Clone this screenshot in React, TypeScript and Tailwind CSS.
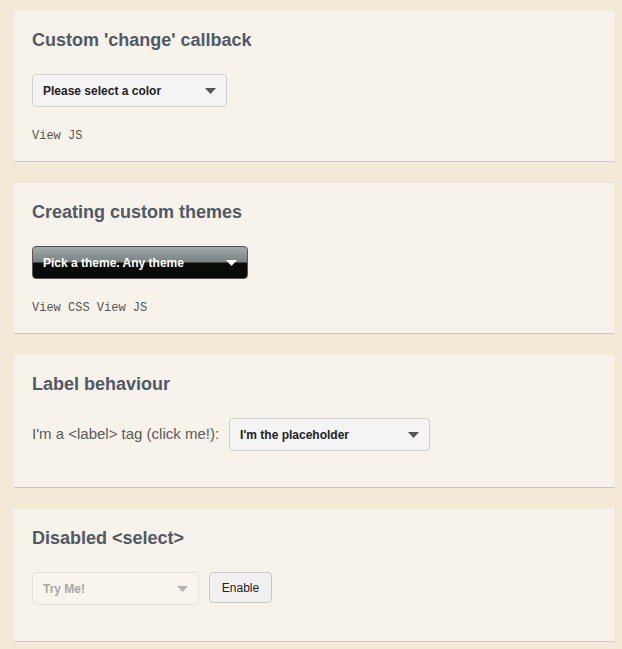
const Caret = ({ className }: { className: string }) => (
  <svg width="11" height="6" viewBox="0 0 11 6" className={className}>
    <path d="M0 0h11L5.5 6z" fill="currentColor" />
  </svg>
);

const Card = ({
  title,
  children,
  bottom = "pb-[17px]",
}: {
  title: string;
  children: React.ReactNode;
  bottom?: string;
}) => (
  <section className={`border-b border-[#c9c7c3] bg-[#f8f3ea] px-[18px] pt-[18px] ${bottom}`}>
    <h2 className="text-[18px] font-bold leading-[22px] text-[#4f5a68]">{title}</h2>
    {children}
  </section>
);

const Links = ({ items }: { items: string[] }) => (
  <p className="mt-[21px] font-['Liberation_Mono',monospace] text-[12px] leading-[16px] text-[#555]">
    {items.join(" ")}
  </p>
);

export default function App() {
  return (
    <main className="min-h-screen bg-[#f4e8d6] px-[14px] pt-[11px] pb-2 font-['Liberation_Sans',Arial,sans-serif] w-[628px]">
      <div className="flex w-[600px] flex-col gap-[21px]">
        <Card title="Custom 'change' callback">
          <div className="mt-[23px] flex h-[33px] w-[195px] items-center justify-between rounded-[4px] border border-[#cfcfcf] bg-[#f4f4f4] pl-[10px] pr-[10px]">
            <span className="text-[12px] font-bold text-[#222]">Please select a color</span>
            <Caret className="text-[#555]" />
          </div>
          <Links items={["View", "JS"]} />
        </Card>

        <Card title="Creating custom themes">
          <div className="mt-[23px] flex h-[33px] w-[216px] items-center justify-between rounded-[4px] border border-[#555] bg-[linear-gradient(#a0a9a9_0%,#7a8383_48%,#0c0e0b_52%,#080908_100%)] pl-[10px] pr-[10px]">
            <span className="text-[12px] font-bold text-white">Pick a theme. Any theme</span>
            <Caret className="text-white" />
          </div>
          <Links items={["View", "CSS", "View", "JS"]} />
        </Card>

        <Card title="Label behaviour" bottom="pb-9">
          <div className="mt-[23px] flex items-center gap-[10px]">
            <label className="text-[15px] text-[#5a5a5a]">I'm a &lt;label&gt; tag (click me!):</label>
            <div className="flex h-[33px] w-[201px] items-center justify-between rounded-[4px] border border-[#cfcfcf] bg-[#f4f4f4] pl-[10px] pr-[10px]">
              <span className="text-[12px] font-bold text-[#222]">I'm the placeholder</span>
              <Caret className="text-[#555]" />
            </div>
          </div>
        </Card>

        <Card title="Disabled <select>" bottom="pb-9">
          <div className="mt-[23px] flex items-start gap-[10px]">
            <div className="flex h-[33px] w-[167px] items-center justify-between rounded-[4px] border border-[#e6e2da] bg-[#f8f4ed] pl-[10px] pr-[10px]">
              <span className="text-[12px] font-bold text-[#aaa8a4]">Try Me!</span>
              <Caret className="text-[#b5b5b5]" />
            </div>
            <button
              type="button"
              className="h-[31px] w-[63px] rounded-[4px] border border-[#c8c8c8] bg-[#f0f0f0] text-[12px] text-[#222]"
            >
              Enable
            </button>
          </div>
        </Card>
      </div>
    </main>
  );
}
